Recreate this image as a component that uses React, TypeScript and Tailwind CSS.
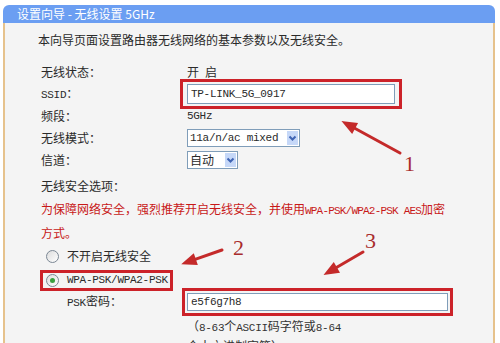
import React from "react";

const L = ({ children }: { children: React.ReactNode }) => (
  <span className="font-['Liberation_Mono',monospace] text-[11px] tracking-[-0.3px]">{children}</span>
);

const Chevron = () => (
  <svg width="11" height="14" viewBox="0 0 11 14">
    <path d="M2.5 5.5 L5.5 8.5 L8.5 5.5" fill="none" stroke="#3f64b4" strokeWidth="2" />
  </svg>
);

const Radio = ({ checked }: { checked?: boolean }) => (
  <div className="flex h-[13px] w-[13px] items-center justify-center rounded-full border border-[#7b8794] bg-gradient-to-br from-[#dcdcdc] to-white">
    {checked && <div className="h-[5px] w-[5px] rounded-full bg-[#3aa040]" />}
  </div>
);

const Row = ({ label, children }: { label: React.ReactNode; children?: React.ReactNode }) => (
  <div className="flex h-[22px] items-center">
    <div className="w-[146px]">{label}</div>
    <div className="flex items-center">{children}</div>
  </div>
);

export default function App() {
  return (
    <div className="relative flex h-[343px] w-[500px] flex-col overflow-hidden bg-white pl-[3px] pr-[5px] pt-[5px] font-['Noto_Sans_CJK_SC',sans-serif] text-[12px] text-[#2a2a2a]">
      <div className="flex h-[23px] items-center rounded-t-[6px] bg-[#6b9ef2] pl-[14px] text-white">
        设置向导 - 无线设置 5GHz
      </div>
      <div className="flex flex-1 flex-col border-x-2 border-[#e6c28c] bg-[#f4f4f4] pl-[36px] pt-[6px]">
        <div className="-ml-[3px] flex h-[22px] items-center">本向导页面设置路由器无线网络的基本参数以及无线安全。</div>
        <div className="mt-[10px] flex flex-col">
          <Row label="无线状态：">
            <span className="flex gap-[6px]">
              <span>开</span>
              <span>启</span>
            </span>
          </Row>
          <Row label={<><L>SSID</L>：</>}>
            <div className="-my-[4px] -ml-[7px] border-[3px] border-[#cc2229] px-[4px] py-[2px]">
              <div className="flex h-[20px] w-[208px] items-center border border-[#7f9db9] bg-white pl-[3px]">
                <L>TP-LINK_5G_0917</L>
              </div>
            </div>
          </Row>
          <Row label="频段：">
            <L>5GHz</L>
          </Row>
          <Row label="无线模式：">
            <div className="flex h-[18px] w-[113px] items-center justify-between border border-[#7f9db9] bg-white pl-[2px] pr-[1px]">
              <L>11a/n/ac mixed</L>
              <div className="flex h-[14px] w-[11px] items-center justify-center bg-[#c6d8f8]">
                <Chevron />
              </div>
            </div>
          </Row>
          <Row label="信道：">
            <div className="flex h-[18px] w-[51px] items-center justify-between border border-[#7f9db9] bg-white pl-[2px] pr-[1px]">
              <span>自动</span>
              <div className="flex h-[14px] w-[11px] items-center justify-center bg-[#c6d8f8]">
                <Chevron />
              </div>
            </div>
          </Row>
        </div>
        <div className="mt-[4px] flex h-[22px] items-center">无线安全选项：</div>
        <div className="mt-[1px] leading-[21px] text-[#c81818]">
          为保障网络安全，强烈推荐开启无线安全，并使用<span className="font-['Liberation_Mono',monospace] text-[11px] tracking-[-0.8px]">WPA-PSK/WPA2-PSK AES</span>加密
          <br />
          方式。
        </div>
        <div className="mt-[2px] flex h-[22px] items-center gap-[8px] pl-[5px]">
          <Radio />
          <span>不开启无线安全</span>
        </div>
        <div className="mt-[3px] flex">
          <div className="-ml-px flex h-[21px] w-[133px] items-center gap-[8px] border-[3px] border-[#cc2229] pl-[3px]">
            <Radio checked />
            <L>WPA-PSK/WPA2-PSK</L>
          </div>
        </div>
        <div className="-mt-[3px] flex h-[28px] items-center">
          <div className="ml-[26px] w-[115px]">
            <L>PSK</L>密码：
          </div>
          <div className="border-[3px] border-[#cc2229] p-[2px]">
            <div className="flex h-[18px] w-[261px] items-center border border-[#7f9db9] bg-white pl-[3px]">
              <L>e5f6g7h8</L>
            </div>
          </div>
        </div>
        <div className="ml-[146px] mt-[1px] leading-[17px] text-[#333]">
          （<L>8-63</L>个<L>ASCII</L>码字符或<L>8-64</L>
          <br />
          个十六进制字符）
        </div>
      </div>

      <svg className="pointer-events-none absolute left-0 top-0" width="500" height="343" viewBox="0 0 500 343">
        <g stroke="#c42a2a" strokeWidth="3" strokeLinecap="round" fill="#c42a2a">
          <line x1="400" y1="153" x2="353.8" y2="127.8" />
          <polygon points="345,123 355.7,124.3 351.9,131.3" />
          <line x1="222" y1="250" x2="194.4" y2="259.7" />
          <polygon points="185,263 193.1,255.9 195.7,263.5" />
          <line x1="363" y1="252" x2="335.6" y2="268" />
          <polygon points="327,273 333.6,264.6 337.6,271.5" />
        </g>
      </svg>
      <div className="pointer-events-none absolute left-[404px] top-[153px] font-['Liberation_Serif',serif] text-[22px] leading-none text-[#a82c2c]">1</div>
      <div className="pointer-events-none absolute left-[233px] top-[237px] font-['Liberation_Serif',serif] text-[22px] leading-none text-[#a82c2c]">2</div>
      <div className="pointer-events-none absolute left-[365px] top-[230px] font-['Liberation_Serif',serif] text-[22px] leading-none text-[#a82c2c]">3</div>
    </div>
  );
}
